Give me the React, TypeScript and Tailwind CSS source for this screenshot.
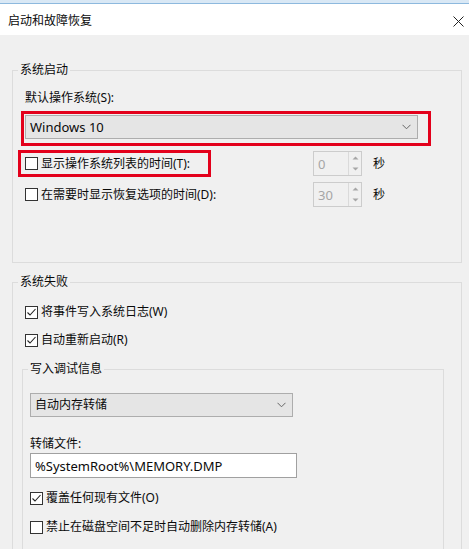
import React from "react";

function Check({ checked }: { checked?: boolean }) {
  return (
    <span className="w-[13px] h-[13px] border border-[#333333] bg-white flex items-center justify-center shrink-0">
      {checked && (
        <svg width="11" height="11" viewBox="0 0 11 11">
          <path d="M1.5 5.5 L4 8 L9.5 2" fill="none" stroke="#222222" strokeWidth="1.1" />
        </svg>
      )}
    </span>
  );
}

function Chevron() {
  return (
    <svg width="9" height="6" viewBox="0 0 9 6">
      <polyline points="0.5,0.8 4.5,4.8 8.5,0.8" fill="none" stroke="#666666" strokeWidth="1" />
    </svg>
  );
}

function Spin({ value }: { value: string }) {
  return (
    <div className="w-[49px] h-[25px] border border-[#cccccc] bg-[#f0f0f0] flex">
      <div className="flex-1 pl-[4px] flex items-center text-[13px] text-[#a6a6a6]">{value}</div>
      <div className="w-[13px] border-l border-[#dadada] flex flex-col">
        <div className="flex-1 flex items-center justify-center">
          <svg width="7" height="4" viewBox="0 0 7 4">
            <polygon points="0.5,3.5 3.5,0.5 6.5,3.5" fill="#a6a6a6" />
          </svg>
        </div>
        <div className="flex-1 flex items-center justify-center">
          <svg width="7" height="4" viewBox="0 0 7 4">
            <polygon points="0.5,0.5 3.5,3.5 6.5,0.5" fill="#a6a6a6" />
          </svg>
        </div>
      </div>
    </div>
  );
}

export default function App() {
  return (
    <div className="w-[469px] h-[549px] overflow-hidden bg-[#f0f0f0] text-[12px] leading-[16px] text-[#0a0a0a] font-['Noto_Sans','Noto_Sans_CJK_SC',sans-serif]">
      <div className="h-[3px] bg-[#d9e8f5]" />
      <div className="h-[1px] bg-[#8db9de]" />
      <div className="h-[31px] bg-white flex items-center justify-between pl-[8px] pr-[5px] pt-[3px]">
        <span>启动和故障恢复</span>
        <svg width="11" height="11" viewBox="0 0 11 11">
          <path d="M0.5 0.5 L10.5 10.5 M10.5 0.5 L0.5 10.5" stroke="#222222" strokeWidth="1" fill="none" />
        </svg>
      </div>

      <div className="pt-[27px] pl-[12px] pr-[7px]">
        <fieldset className="border border-[#dcdcdc] pl-[12px] pr-[12px] pt-[12px] pb-[55px]">
          <legend className="-ml-[7px] px-[2px] leading-[16px]">系统启动</legend>
          <div className="h-[16px]">默认操作系统(S):</div>
          <div className="relative mt-[9px] w-[393px] h-[24px] border border-[#adadad] bg-[#e5e5e5] flex items-center justify-between pl-[4px] pr-[6px]">
            <span className="text-[13px]">Windows 10</span>
            <Chevron />
            <div className="absolute -left-[5px] -top-[5px] w-[410px] h-[35px] border-[3px] border-[#e3001b]" />
          </div>
          <div className="relative mt-[12px] h-[25px] flex items-center">
            <div className="w-[288px] flex items-center">
              <Check />
              <span className="ml-[3px]">显示操作系统列表的时间(T):</span>
            </div>
            <Spin value="0" />
            <span className="ml-[11px]">秒</span>
            <div className="absolute -left-[7px] -top-[1px] w-[193px] h-[27px] border-[3px] border-[#e3001b]" />
          </div>
          <div className="mt-[6px] h-[25px] flex items-center">
            <div className="w-[288px] flex items-center">
              <Check />
              <span className="ml-[3px]">在需要时显示恢复选项的时间(D):</span>
            </div>
            <Spin value="30" />
            <span className="ml-[11px]">秒</span>
          </div>
        </fieldset>

        <fieldset className="mt-[11px] border border-[#dcdcdc] pl-[12px] pr-[17px] pt-[12px] pb-[40px]">
          <legend className="-ml-[7px] px-[2px] leading-[16px]">系统失败</legend>
          <div className="h-[20px] flex items-center">
            <Check checked />
            <span className="ml-[3px]">将事件写入系统日志(W)</span>
          </div>
          <div className="mt-[8px] h-[20px] flex items-center">
            <Check checked />
            <span className="ml-[3px]">自动重新启动(R)</span>
          </div>

          <fieldset className="mt-[11px] -ml-[3px] border border-[#dcdcdc] pl-[7px] pr-[12px] pt-[16px] pb-[40px]">
            <legend className="-ml-[2px] px-[2px] leading-[16px]">写入调试信息</legend>
            <div className="w-[263px] h-[24px] border border-[#adadad] bg-[#e5e5e5] flex items-center justify-between pl-[4px] pr-[6px]">
              <span>自动内存转储</span>
              <Chevron />
            </div>
            <div className="mt-[19px] h-[16px]">转储文件:</div>
            <div className="mt-[1px] w-[267px] h-[25px] border border-[#a0a0a0] bg-white flex items-center pl-[4px] text-[13px]">
              %SystemRoot%\MEMORY.DMP
            </div>
            <div className="mt-[10px] h-[20px] flex items-center">
              <Check checked />
              <span className="ml-[3px]">覆盖任何现有文件(O)</span>
            </div>
            <div className="mt-[9px] h-[20px] flex items-center">
              <Check />
              <span className="ml-[3px]">禁止在磁盘空间不足时自动删除内存转储(A)</span>
            </div>
          </fieldset>
        </fieldset>
      </div>
    </div>
  );
}
